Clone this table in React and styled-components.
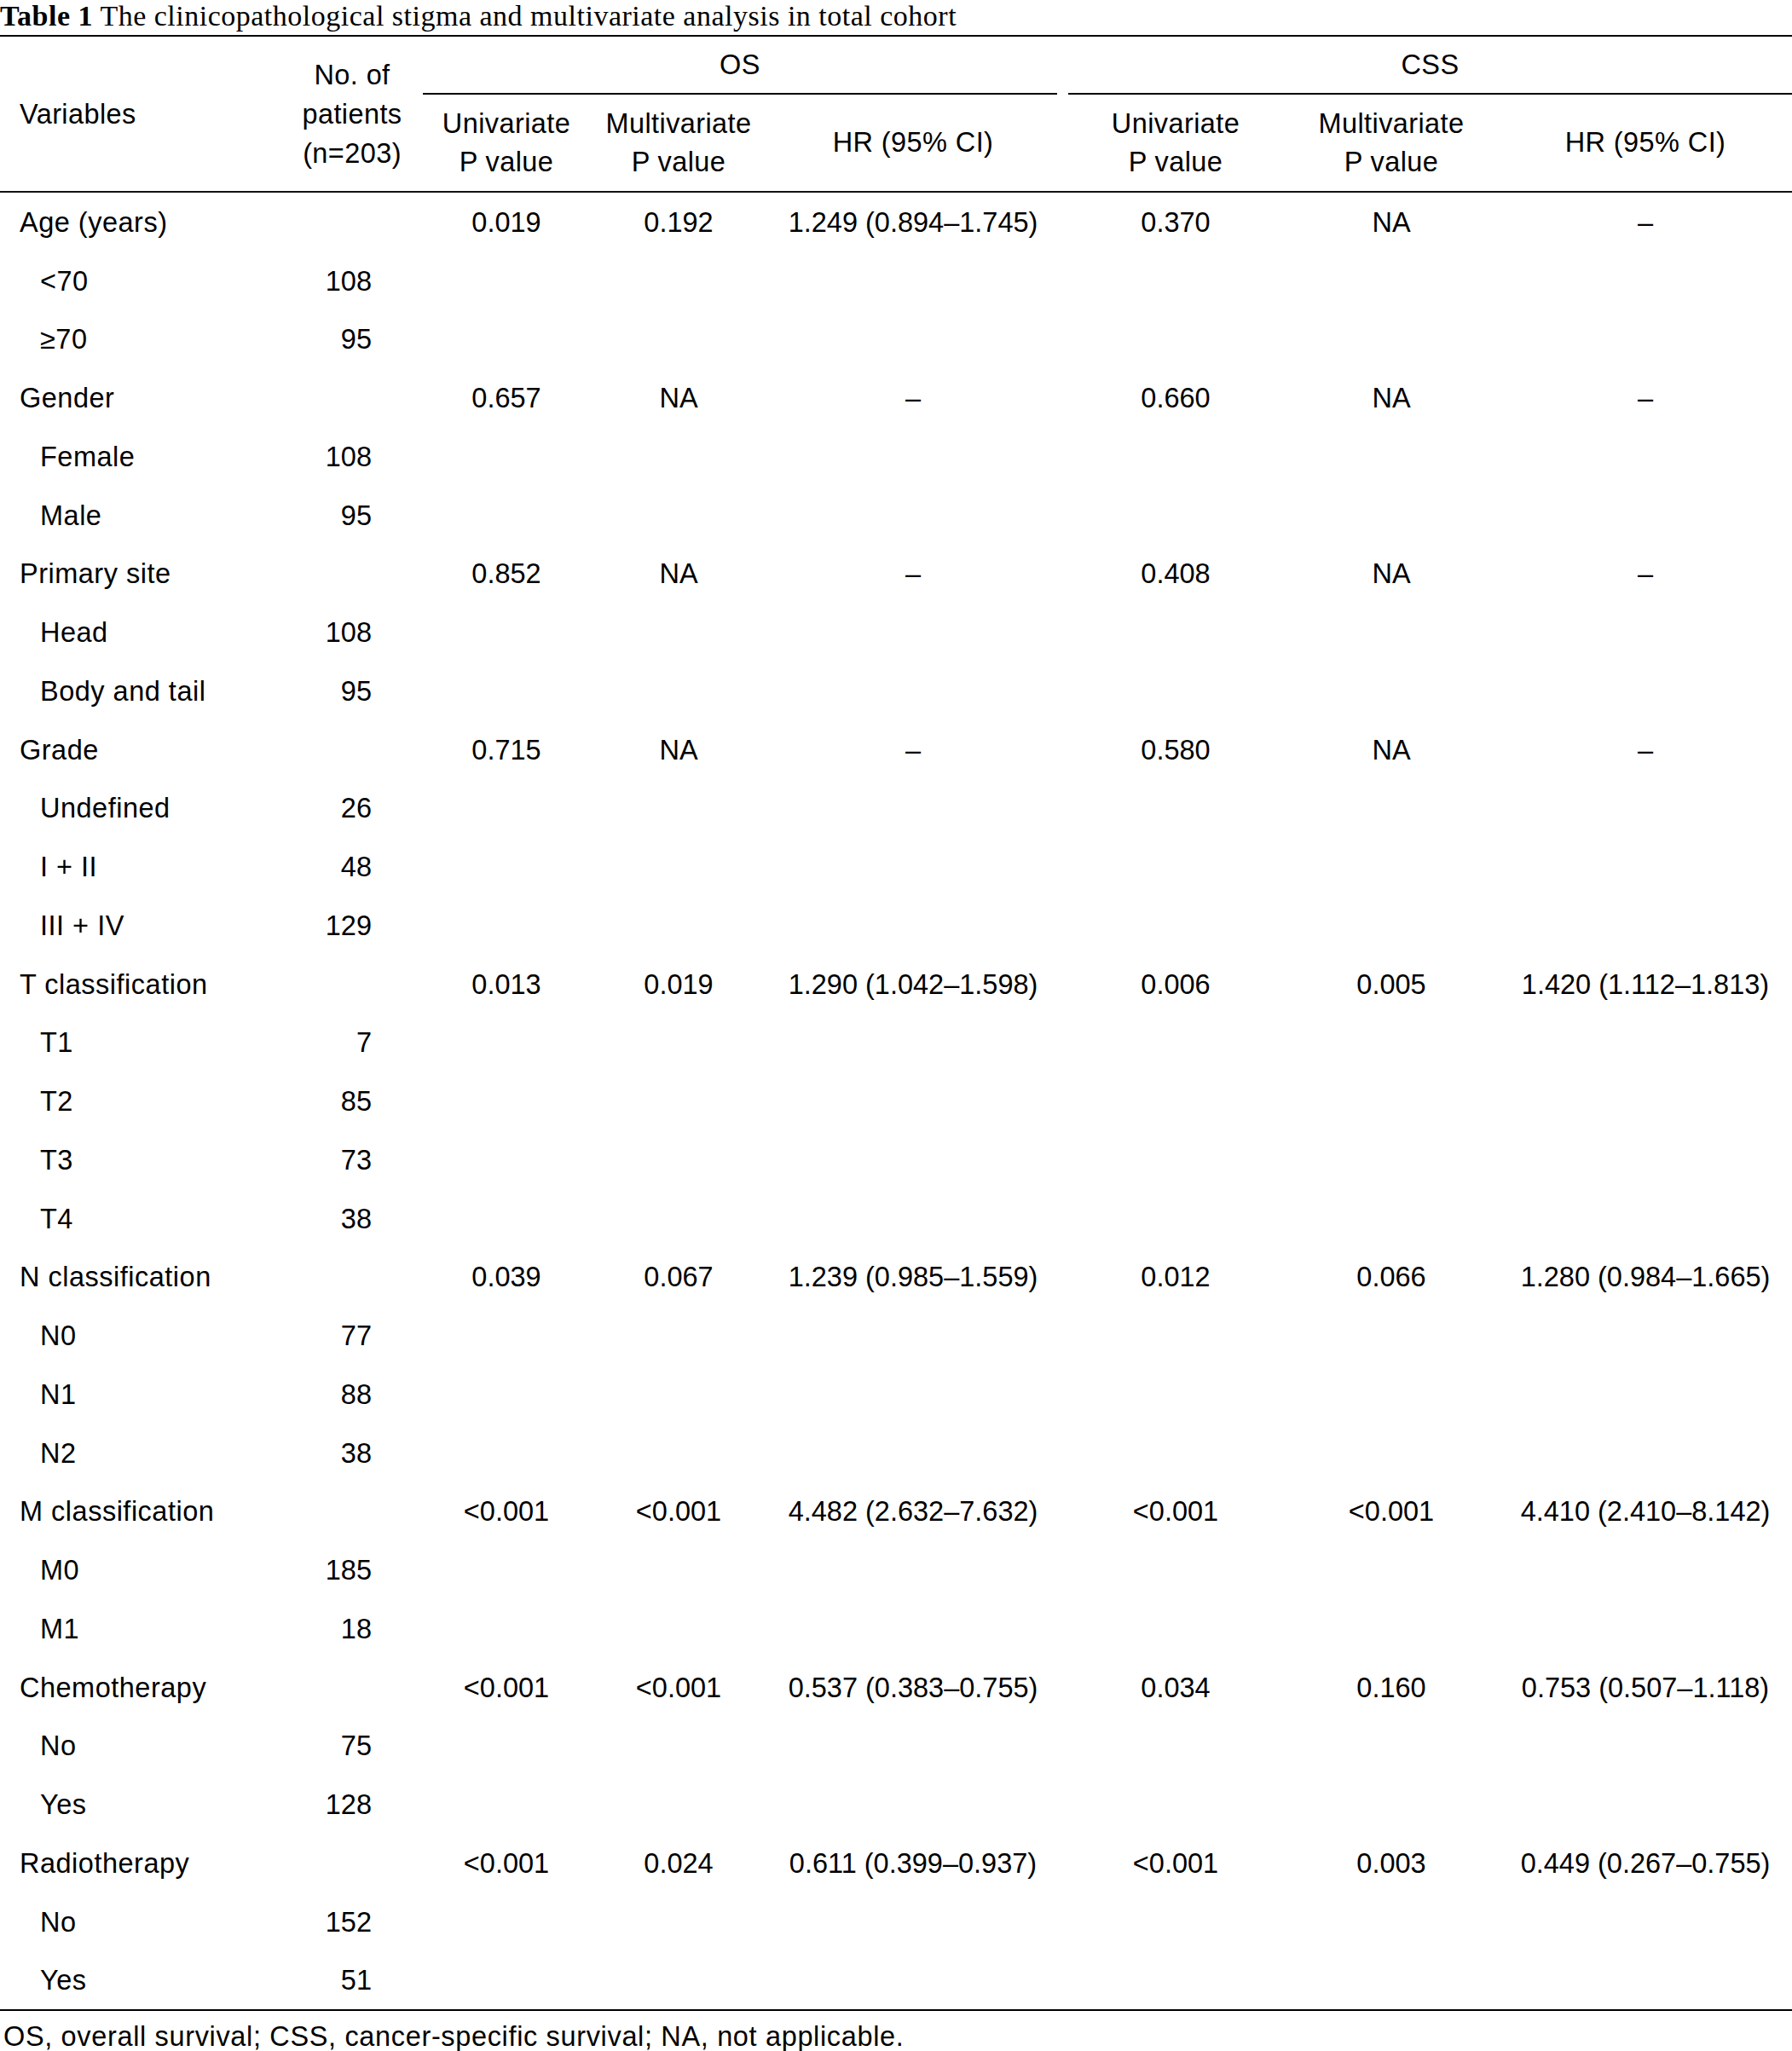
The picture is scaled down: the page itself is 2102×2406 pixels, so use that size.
import React from "react";
import styled, { createGlobalStyle } from "styled-components";

const COLS = "330px 166px 196px 208px 342px 274px 242px 344px";

const Global = createGlobalStyle`
  html, body { margin: 0; padding: 0; background: #ffffff; overflow: hidden; }
  body { font-family: "Liberation Sans", Arial, Helvetica, sans-serif; color: #000; }
`;

const Page = styled.div`
  width: 2102px;
  font-size: 32.5px;
`;

const Caption = styled.div`
  font-family: "Liberation Serif", "Times New Roman", serif;
  font-size: 34px;
  line-height: 38px;
  height: 38px;
  margin-bottom: 3px;
  letter-spacing: 0.5px;
  white-space: nowrap;
`;

const CaptionLabel = styled.span`
  font-weight: 700;
`;

const Table = styled.div`
  border-top: 2px solid #000;
  border-bottom: 2px solid #000;
`;

const Head = styled.div`
  display: grid;
  grid-template-columns: ${COLS};
  grid-template-rows: 68px 113px;
  border-bottom: 2px solid #111;
  letter-spacing: 0.4px;
`;

const SpanHead = styled.div`
  grid-row: 1 / 3;
  display: flex;
  flex-direction: column;
  justify-content: center;
  align-items: ${(p) => (p.$left ? "flex-start" : "center")};
  padding-left: ${(p) => (p.$left ? "23px" : "0")};
  line-height: 46px;
  text-align: center;
`;

const GroupHead = styled.div`
  grid-row: 1;
  grid-column: ${(p) => p.$col} / span 3;
  display: flex;
  align-items: center;
  justify-content: center;
  border-bottom: 2px solid #000;
  margin-left: ${(p) => p.$ml || 0}px;
  margin-right: ${(p) => p.$mr || 0}px;
  box-sizing: border-box;
`;

const SubHead = styled.div`
  grid-row: 2;
  display: flex;
  flex-direction: column;
  align-items: center;
  justify-content: center;
  line-height: 45px;
  text-align: center;
  padding-right: ${(p) => p.$pr || 0}px;
`;

const Body = styled.div``;

const Row = styled.div`
  display: grid;
  grid-template-columns: ${COLS};
  height: 68.75px;
  box-sizing: border-box;
  padding-top: 2px;
  align-items: center;
  white-space: nowrap;
`;

const Label = styled.div`
  padding-left: ${(p) => (p.$sub ? 47 : 23)}px;
  letter-spacing: 0.5px;
`;

const Count = styled.div`
  text-align: right;
  padding-right: 60px;
`;

const Val = styled.div`
  text-align: center;
  padding-right: ${(p) => p.$pr || 0}px;
`;

const Footnote = styled.div`
  margin-top: 12px;
  padding-left: 4px;
  letter-spacing: 0.65px;
  white-space: nowrap;
`;

// extra right padding per data column (shifts the centre of column 7 slightly left)
const PAD = [0, 0, 0, 0, 10, 0];

const rows = [
  ["Age (years)", "", "0.019", "0.192", "1.249 (0.894–1.745)", "0.370", "NA", "–"],
  ["<70", "108"],
  ["≥70", "95"],
  ["Gender", "", "0.657", "NA", "–", "0.660", "NA", "–"],
  ["Female", "108"],
  ["Male", "95"],
  ["Primary site", "", "0.852", "NA", "–", "0.408", "NA", "–"],
  ["Head", "108"],
  ["Body and tail", "95"],
  ["Grade", "", "0.715", "NA", "–", "0.580", "NA", "–"],
  ["Undefined", "26"],
  ["I + II", "48"],
  ["III + IV", "129"],
  ["T classification", "", "0.013", "0.019", "1.290 (1.042–1.598)", "0.006", "0.005", "1.420 (1.112–1.813)"],
  ["T1", "7"],
  ["T2", "85"],
  ["T3", "73"],
  ["T4", "38"],
  ["N classification", "", "0.039", "0.067", "1.239 (0.985–1.559)", "0.012", "0.066", "1.280 (0.984–1.665)"],
  ["N0", "77"],
  ["N1", "88"],
  ["N2", "38"],
  ["M classification", "", "<0.001", "<0.001", "4.482 (2.632–7.632)", "<0.001", "<0.001", "4.410 (2.410–8.142)"],
  ["M0", "185"],
  ["M1", "18"],
  ["Chemotherapy", "", "<0.001", "<0.001", "0.537 (0.383–0.755)", "0.034", "0.160", "0.753 (0.507–1.118)"],
  ["No", "75"],
  ["Yes", "128"],
  ["Radiotherapy", "", "<0.001", "0.024", "0.611 (0.399–0.937)", "<0.001", "0.003", "0.449 (0.267–0.755)"],
  ["No", "152"],
  ["Yes", "51"],
];

const subHeads = [
  ["Univariate", "P value"],
  ["Multivariate", "P value"],
  ["HR (95% CI)"],
  ["Univariate", "P value"],
  ["Multivariate", "P value"],
  ["HR (95% CI)"],
];

export default function App() {
  return (
    <Page>
      <Global />
      <Caption>
        <CaptionLabel>Table 1</CaptionLabel> The clinicopathological stigma and multivariate analysis in total cohort
      </Caption>
      <Table>
        <Head>
          <SpanHead $left>Variables</SpanHead>
          <SpanHead>
            <span>No. of</span>
            <span>patients</span>
            <span>(n=203)</span>
          </SpanHead>
          <GroupHead $col={3} $mr={2}>OS</GroupHead>
          <GroupHead $col={6} $ml={11}>CSS</GroupHead>
          {subHeads.map((lines, i) => (
            <SubHead key={i} $pr={PAD[i]}>
              {lines.map((l, j) => (
                <span key={j}>{l}</span>
              ))}
            </SubHead>
          ))}
        </Head>
        <Body>
          {rows.map((r, i) => {
            const sub = r.length === 2;
            return (
              <Row key={i}>
                <Label $sub={sub}>{r[0]}</Label>
                <Count>{r[1]}</Count>
                {!sub &&
                  r.slice(2).map((v, j) => (
                    <Val key={j} $pr={PAD[j]}>
                      {v}
                    </Val>
                  ))}
              </Row>
            );
          })}
        </Body>
      </Table>
      <Footnote>OS, overall survival; CSS, cancer-specific survival; NA, not applicable.</Footnote>
    </Page>
  );
}
